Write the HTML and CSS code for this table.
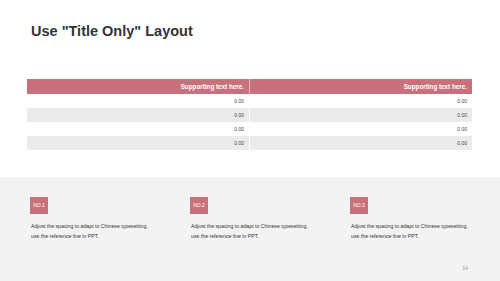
FILE: index.html
```html
<!DOCTYPE html>
<html lang="en">
  <head>
    <meta charset="UTF-8" />
    <meta name="viewport" content="width=device-width, initial-scale=1.0" />
    <title>Title Only Layout</title>
    <link rel="stylesheet" href="styles.css">
  </head>
  <body>
    <div class="slide">
      <h1 class="slide-title">Use "Title Only" Layout</h1>

      <table class="data-table">
        <thead>
          <tr>
            <th>Supporting text here.</th>
            <th>Supporting text here.</th>
          </tr>
        </thead>
        <tbody>
          <tr><td>0.00</td><td>0.00</td></tr>
          <tr><td>0.00</td><td>0.00</td></tr>
          <tr><td>0.00</td><td>0.00</td></tr>
          <tr><td>0.00</td><td>0.00</td></tr>
        </tbody>
      </table>

      <div class="notes">
        <div class="note">
          <div class="note-badge">NO.1</div>
          <p>Adjust the spacing to adapt to Chinese typesetting,<br>use the reference line in PPT.</p>
        </div>
        <div class="note">
          <div class="note-badge">NO.2</div>
          <p>Adjust the spacing to adapt to Chinese typesetting,<br>use the reference line in PPT.</p>
        </div>
        <div class="note">
          <div class="note-badge">NO.3</div>
          <p>Adjust the spacing to adapt to Chinese typesetting,<br>use the reference line in PPT.</p>
        </div>
        <span class="page-num">14</span>
      </div>
    </div>
  </body>
</html>
```

FILE: styles.css
```css
body {
  margin: 0;
  font-family: "Liberation Sans", Arial, sans-serif;
  background-color: #ffffff;
}

.slide {
  width: 500px;
  height: 281px;
  display: flex;
  flex-direction: column;
  overflow: hidden;
}

.slide-title {
  margin: 21px 0 0 31px;
  font-size: 14.5px;
  line-height: 20px;
  font-weight: bold;
  color: #333333;
}

.data-table {
  margin: 38px 0 0 27px;
  width: 445px;
  border-collapse: collapse;
  table-layout: fixed;
}

.data-table th {
  height: 15px;
  padding: 0 5px 0 0;
  background: #c9717a;
  color: #ffffff;
  font-size: 6.3px;
  font-weight: bold;
  text-align: right;
  border-left: 1px solid #e4b6ba;
}

.data-table th:first-child {
  border-left: none;
}

.data-table td {
  height: 14px;
  padding: 0 5px 0 0;
  font-size: 5px;
  color: #444444;
  text-align: right;
  border-left: 1px solid #ffffff;
}

.data-table td:first-child {
  border-left: none;
}

.data-table tbody tr:nth-child(even) td {
  background: #ebebeb;
}

.notes {
  position: relative;
  margin-top: 27px;
  flex: 1;
  background: #f3f3f3;
  display: flex;
  padding: 20px 0 0 30px;
}

.note {
  flex: 0 0 160px;
}

.note-badge {
  width: 18px;
  height: 17px;
  background: #c9717a;
  color: #ffffff;
  font-size: 5px;
  line-height: 17px;
  text-align: center;
}

.note p {
  margin: 8px 0 0 1px;
  font-size: 5.2px;
  line-height: 9.5px;
  color: #333333;
}

.page-num {
  position: absolute;
  right: 32px;
  bottom: 10px;
  font-size: 5.2px;
  color: #999999;
}
```
